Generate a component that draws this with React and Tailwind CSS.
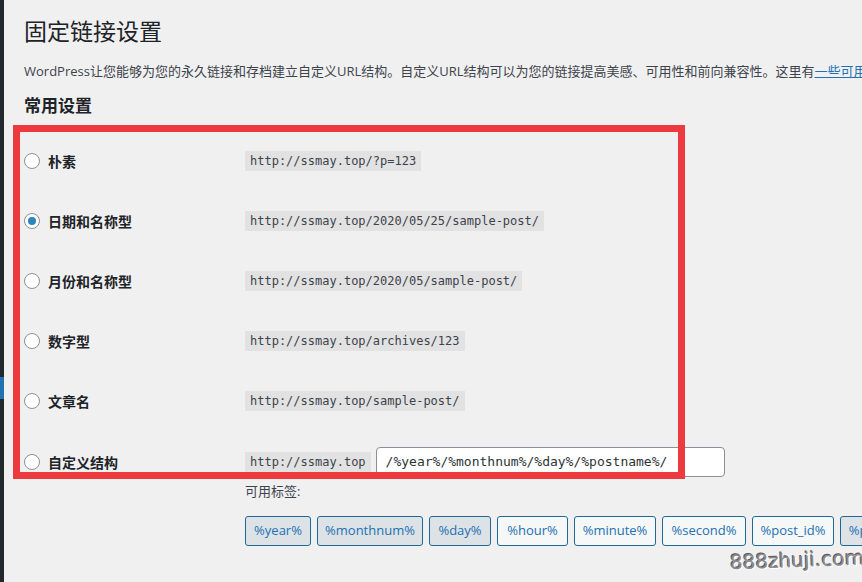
const rows = [
  { label: '朴素', code: 'http://ssmay.top/?p=123' },
  { label: '日期和名称型', code: 'http://ssmay.top/2020/05/25/sample-post/', checked: true },
  { label: '月份和名称型', code: 'http://ssmay.top/2020/05/sample-post/' },
  { label: '数字型', code: 'http://ssmay.top/archives/123' },
  { label: '文章名', code: 'http://ssmay.top/sample-post/' },
];

const tags = [
  { t: '%year%', w: 'w-[66px]', active: true },
  { t: '%monthnum%', w: 'w-[106px]', active: true },
  { t: '%day%', w: 'w-[62px]', active: true },
  { t: '%hour%', w: 'w-[71px]' },
  { t: '%minute%', w: 'w-[82px]' },
  { t: '%second%', w: 'w-[84px]' },
  { t: '%post_id%', w: 'w-[82px]' },
  { t: '%postname%', w: 'w-[100px]', active: true },
];

const sans = "font-['Segoe_UI','Open_Sans','Noto_Sans_CJK_SC',sans-serif]";
const mono = "font-['DejaVu_Sans_Mono','Liberation_Mono',monospace]";

function Radio({ checked }) {
  return (
    <span className="flex h-4 w-4 shrink-0 items-center justify-center rounded-full border border-[#8c8f94] bg-white">
      {checked && <span className="h-2 w-2 rounded-full bg-[#2c86bd]" />}
    </span>
  );
}

function Code({ children }) {
  return (
    <code className={`${mono} bg-[#e2e2e3] px-[5px] pt-[2px] pb-[1px] text-[12px] leading-[17px] text-[#3c434a]`}>
      {children}
    </code>
  );
}

export default function App() {
  return (
    <div className={`${sans} relative flex h-[582px] w-[862px] overflow-hidden bg-[#f0f0f1] text-[#1d2327]`}>
      <div className="flex w-[4px] shrink-0 flex-col bg-[#23282d]">
        <div className="h-[377px]" />
        <div className="h-[22px] bg-[#2271b1]" />
      </div>

      <div className="min-w-0 flex-1 pl-[20px]">
        <h1 className="pt-[16px] text-[23px] leading-[30px] font-normal">固定链接设置</h1>
        <p className="mt-[15px] whitespace-nowrap text-[13px] leading-[20px] text-[#3c434a]">
          WordPress让您能够为您的永久链接和存档建立自定义URL结构。自定义URL结构可以为您的链接提高美感、可用性和前向兼容性。这里有
          <span className="text-[#2271b1] underline">一些可用的标签</span>
        </p>
        <h2 className="mt-[13px] text-[17px] leading-[24px] font-bold">常用设置</h2>

        <div className="mt-[13px]">
          {rows.map((r) => (
            <div key={r.label} className="flex h-[60px] items-center">
              <div className="flex w-[221px] shrink-0 items-center gap-2">
                <Radio checked={r.checked} />
                <span className="text-[14px] font-semibold">{r.label}</span>
              </div>
              <Code>{r.code}</Code>
            </div>
          ))}
          <div className="flex items-center pt-[16px]">
            <div className="flex w-[221px] shrink-0 items-center gap-2">
              <Radio />
              <span className="text-[14px] font-semibold">自定义结构</span>
            </div>
            <Code>http://ssmay.top</Code>
            <div
              className={`${mono} ml-[5px] flex h-[30px] w-[349px] items-center rounded-[4px] border border-[#8c8f94] bg-white px-[9px] text-[13px] text-[#2c3338]`}
            >
              /%year%/%monthnum%/%day%/%postname%/
            </div>
          </div>
        </div>

        <div className="pl-[221px]">
          <p className="mt-[4px] text-[13px] leading-[20px] text-[#3c434a]">可用标签:</p>
          <div className="mt-[15px] flex gap-[6px]">
            {tags.map((tag) => (
              <button
                key={tag.t}
                className={`${tag.w} h-[30px] shrink-0 rounded-[3px] border border-[#1f6a94] text-[13px] text-[#2271b1] ${
                  tag.active ? 'bg-[#dde2e7]' : 'bg-[#f6f7f7]'
                }`}
              >
                {tag.t}
              </button>
            ))}
          </div>
        </div>
      </div>

      <div className="pointer-events-none absolute left-[13px] top-[125px] h-[354px] w-[672px] border-[7px] border-[#ec3a3e]" />

      <div className="pointer-events-none absolute left-[730px] top-[545px] -rotate-2 font-['DejaVu_Sans',sans-serif] text-[20px] text-[#8a8a8e] [text-shadow:1px_1px_0_#ffffff,-1px_-1px_0_#5a5a5e]">
        888zhuji.com
      </div>
    </div>
  );
}
